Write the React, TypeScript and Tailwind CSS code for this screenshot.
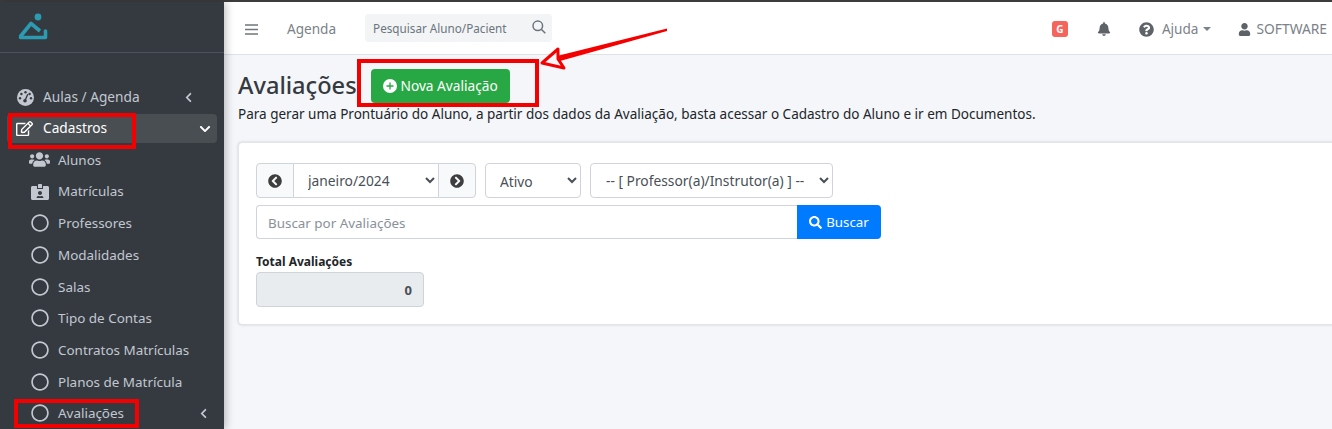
import React from "react";
import {
  FaRegEdit,
  FaUsers,
  FaIdCardAlt,
  FaRegCircle,
  FaChevronLeft,
  FaChevronDown,
  FaSearch,
  FaBell,
  FaQuestionCircle,
  FaUser,
  FaChevronCircleLeft,
  FaChevronCircleRight,
} from "react-icons/fa";

const font = { fontFamily: '"Noto Sans", sans-serif' };

const subItems = [
  "Professores",
  "Modalidades",
  "Salas",
  "Tipo de Contas",
  "Contratos Matrículas",
  "Planos de Matrícula",
];

function SubItem({ icon, label, chevron }: { icon: React.ReactNode; label: string; chevron?: boolean }) {
  return (
    <div className="mb-[2px] flex h-[29.7px] shrink-0 items-center pl-[29px] pr-[15px] text-[13.45px] text-[#c2c7d0]">
      <span className="flex w-[21px] justify-center">{icon}</span>
      <span className="ml-[8px] flex-1 whitespace-nowrap">{label}</span>
      {chevron && <FaChevronLeft className="text-[11px]" />}
    </div>
  );
}

function Gauge() {
  return (
    <svg width="17" height="17" viewBox="0 0 17 17">
      <circle cx="8.5" cy="8.5" r="8.5" fill="#c2c7d0" />
      <circle cx="8.5" cy="3.2" r="1.2" fill="#343a40" />
      <circle cx="4.4" cy="5" r="1.2" fill="#343a40" />
      <circle cx="12.6" cy="5" r="1.2" fill="#343a40" />
      <circle cx="3" cy="9.2" r="1.2" fill="#343a40" />
      <circle cx="14" cy="9.2" r="1.2" fill="#343a40" />
      <path d="M10.8 5.2 L8.2 11" stroke="#343a40" strokeWidth="1.4" />
      <circle cx="8" cy="11.8" r="1.8" fill="#343a40" />
    </svg>
  );
}

function Sidebar() {
  return (
    <aside className="z-10 flex w-[224px] shrink-0 flex-col overflow-hidden bg-[#343a40] shadow-[2px_0_8px_rgba(0,0,0,0.25)]">
      <div className="flex h-[51px] shrink-0 items-start border-b border-[#4b545c] pl-[18px] pt-[10px]">
        <svg width="30" height="29" viewBox="0 0 30 29" fill="none">
          <circle cx="20" cy="5" r="3.4" fill="#2b9bb1" />
          <path d="M2 25 L13 11.5 L22 19" stroke="#2b9bb1" strokeWidth="3.6" strokeLinejoin="round" />
          <path d="M2.5 25.5 H27.5 V19" stroke="#2b9bb1" strokeWidth="3.6" strokeLinecap="round" strokeLinejoin="round" />
        </svg>
      </div>
      <nav className="mt-[28px] flex flex-col">
        <div className="flex h-[33px] shrink-0 items-center pl-[17px] pr-[30px] text-[13.7px] text-[#c2c7d0]">
          <Gauge />
          <span className="ml-[9px] flex-1">Aulas / Agenda</span>
          <FaChevronLeft className="text-[11px]" />
        </div>
        <div className="mx-[7px] mb-[2px] flex h-[29px] shrink-0 items-center rounded-[4px] bg-[#494e53] pl-[9px] pr-[6px] text-[13.7px] text-white">
          <FaRegEdit className="text-[17px]" />
          <span className="ml-[10px] flex-1">Cadastros</span>
          <FaChevronDown className="text-[12px]" />
        </div>
        <SubItem icon={<FaUsers className="text-[21px]" />} label="Alunos" />
        <SubItem icon={<FaIdCardAlt className="text-[18px]" />} label="Matrículas" />
        {subItems.map((s) => (
          <SubItem key={s} icon={<FaRegCircle className="text-[18px]" />} label={s} />
        ))}
        <SubItem icon={<FaRegCircle className="text-[18px]" />} label="Avaliações" chevron />
      </nav>
    </aside>
  );
}

function Header() {
  return (
    <header className="flex h-[53px] shrink-0 items-center border-b border-[#dee2e6] bg-white pt-[2px] text-[13.6px] text-[#7b8288]">
      <svg className="ml-[21px]" width="13" height="11" viewBox="0 0 13 11" stroke="#6f767c" strokeWidth="1.5">
        <path d="M0 1 H13 M0 5.5 H13 M0 10 H13" />
      </svg>
      <span className="ml-[29px]">Agenda</span>
      <div className="mb-[2px] ml-[29px] flex h-[28px] w-[187px] items-center justify-between rounded-[4px] bg-[#f2f4f6] pl-[8px] pr-[6px] pt-[2px] text-[11.7px] text-[#6c757d]">
        <span>Pesquisar Aluno/Pacient</span>
        <svg className="mb-[5px]" width="14" height="14" viewBox="0 0 14 14" fill="none" stroke="#6c757d" strokeWidth="1.5">
          <circle cx="5.8" cy="5.8" r="4.8" />
          <path d="M9.3 9.3 L13.3 13.3" />
        </svg>
      </div>
      <div className="ml-auto flex items-center pr-[5px]">
        <span className="flex h-[16px] w-[16px] items-center justify-center rounded-[3px] bg-[#f4665c] text-[10px] font-bold text-white">
          G
        </span>
        <FaBell className="ml-[29px] text-[14px] text-[#5e6368]" />
        <FaQuestionCircle className="ml-[28px] text-[15px] text-[#5e6368]" />
        <span className="ml-[8px]">Ajuda</span>
        <span className="ml-[5px] h-0 w-0 border-x-[4px] border-t-[4px] border-x-transparent border-t-[#7b8288]" />
        <FaUser className="ml-[27px] text-[13px] text-[#5e6368]" />
        <span className="ml-[5px] text-[13.8px]">SOFTWARE</span>
      </div>
    </header>
  );
}

function Filters() {
  return (
    <div className="-mr-[100px] ml-[14px] mt-[18px] h-[183px] w-[1200px] rounded-[4px] border border-[#e1e4e8] bg-white px-[17px] pt-[20px] shadow-[0_0_3px_rgba(0,0,0,0.15)]">
      <div className="flex gap-[9px] text-[13.8px] text-[#495057]">
        <div className="flex h-[35px] w-[220px]">
          <span className="flex w-[38px] items-center justify-center rounded-l-[4px] border border-[#ced4da] bg-[#f8f9fa]">
            <FaChevronCircleLeft className="text-[14px] text-[#3e3e3e]" />
          </span>
          <select className="h-full min-w-0 flex-1 border-y border-[#ced4da] bg-white pl-[10px] text-[#495057] outline-none">
            <option>janeiro/2024</option>
          </select>
          <span className="flex w-[38px] items-center justify-center rounded-r-[4px] border border-[#ced4da] bg-[#f8f9fa]">
            <FaChevronCircleRight className="text-[14px] text-[#3e3e3e]" />
          </span>
        </div>
        <select className="h-[35px] w-[96px] rounded-[4px] border border-[#ced4da] bg-white pl-[10px] pt-[1px] text-[#495057] outline-none">
          <option>Ativo</option>
        </select>
        <select className="h-[35px] w-[243px] rounded-[4px] border border-[#ced4da] bg-white pl-[11px] text-[#495057] outline-none">
          <option>-- [ Professor(a)/Instrutor(a) ] --</option>
        </select>
      </div>
      <div className="mt-[7px] flex h-[34px] w-[625px]">
        <div className="flex flex-1 items-center rounded-l-[4px] border border-r-0 border-[#ced4da] pl-[11px] pt-[2px] text-[13.4px] text-[#8a9199]">
          Buscar por Avaliações
        </div>
        <button className="flex w-[84px] items-center justify-center gap-[4px] rounded-r-[4px] bg-[#007bff] pt-[1px] text-[13.3px] text-white">
          <FaSearch className="text-[13px]" />
          Buscar
        </button>
      </div>
      <div className="mt-[15px] text-[12px] font-bold leading-[16px] text-[#212529]">Total Avaliações</div>
      <div className="mt-[2px] flex h-[35px] w-[168px] items-center justify-end rounded-[4px] border border-[#ced4da] bg-[#e9ecef] pr-[11px] pt-[3px] text-[13px] font-bold text-[#495057]">
        0
      </div>
    </div>
  );
}

function Annotations() {
  return (
    <div className="absolute inset-0 z-20">
      <div className="absolute left-[8px] top-[113px] h-[36px] w-[128px] border-[4px] border-[#f50000]" />
      <div className="absolute left-[14px] top-[399px] h-[29px] w-[125px] border-[4px] border-[#f50000]" />
      <div className="absolute left-[357px] top-[59px] h-[48px] w-[182px] border-[4px] border-[#f50000]" />
      <svg className="absolute left-0 top-0" width="1332" height="429" fill="none">
        <path d="M667 28.5 L667 31 L560 61 L557 56 Z" fill="#f50000" />
        <path d="M558 49 L542 63 L564 68 L558 59 Z" stroke="#f50000" strokeWidth="3" strokeLinejoin="round" />
      </svg>
    </div>
  );
}

export default function App() {
  return (
    <div style={font} className="relative flex h-[429px] w-[1332px] flex-col overflow-hidden bg-[#f4f6f9]">
      <div className="h-[2px] shrink-0 bg-[#3c3c3c]" />
      <div className="flex min-h-0 flex-1">
        <Sidebar />
        <main className="flex min-w-0 flex-1 flex-col">
          <Header />
          <div className="mt-[14px] flex h-[34px] shrink-0 items-center pl-[14px]">
            <h1 className="text-[23.6px] font-medium text-[#343a40]">Avaliações</h1>
            <button className="ml-[14px] flex h-[34px] w-[139px] items-center justify-center gap-[4px] rounded-[4px] bg-[#28a745] text-[13.7px] text-white">
              <svg width="14" height="14" viewBox="0 0 14 14">
                <circle cx="7" cy="7" r="7" fill="#fff" />
                <path d="M7 3.5 V10.5 M3.5 7 H10.5" stroke="#28a745" strokeWidth="1.3" />
              </svg>
              Nova Avaliação
            </button>
          </div>
          <p className="ml-[14px] mt-[1px] whitespace-nowrap text-[13.53px] leading-[20px] text-[#212529]">
            Para gerar uma Prontuário do Aluno, a partir dos dados da Avaliação, basta acessar o Cadastro do Aluno e ir em Documentos.
          </p>
          <Filters />
        </main>
      </div>
      <Annotations />
    </div>
  );
}
